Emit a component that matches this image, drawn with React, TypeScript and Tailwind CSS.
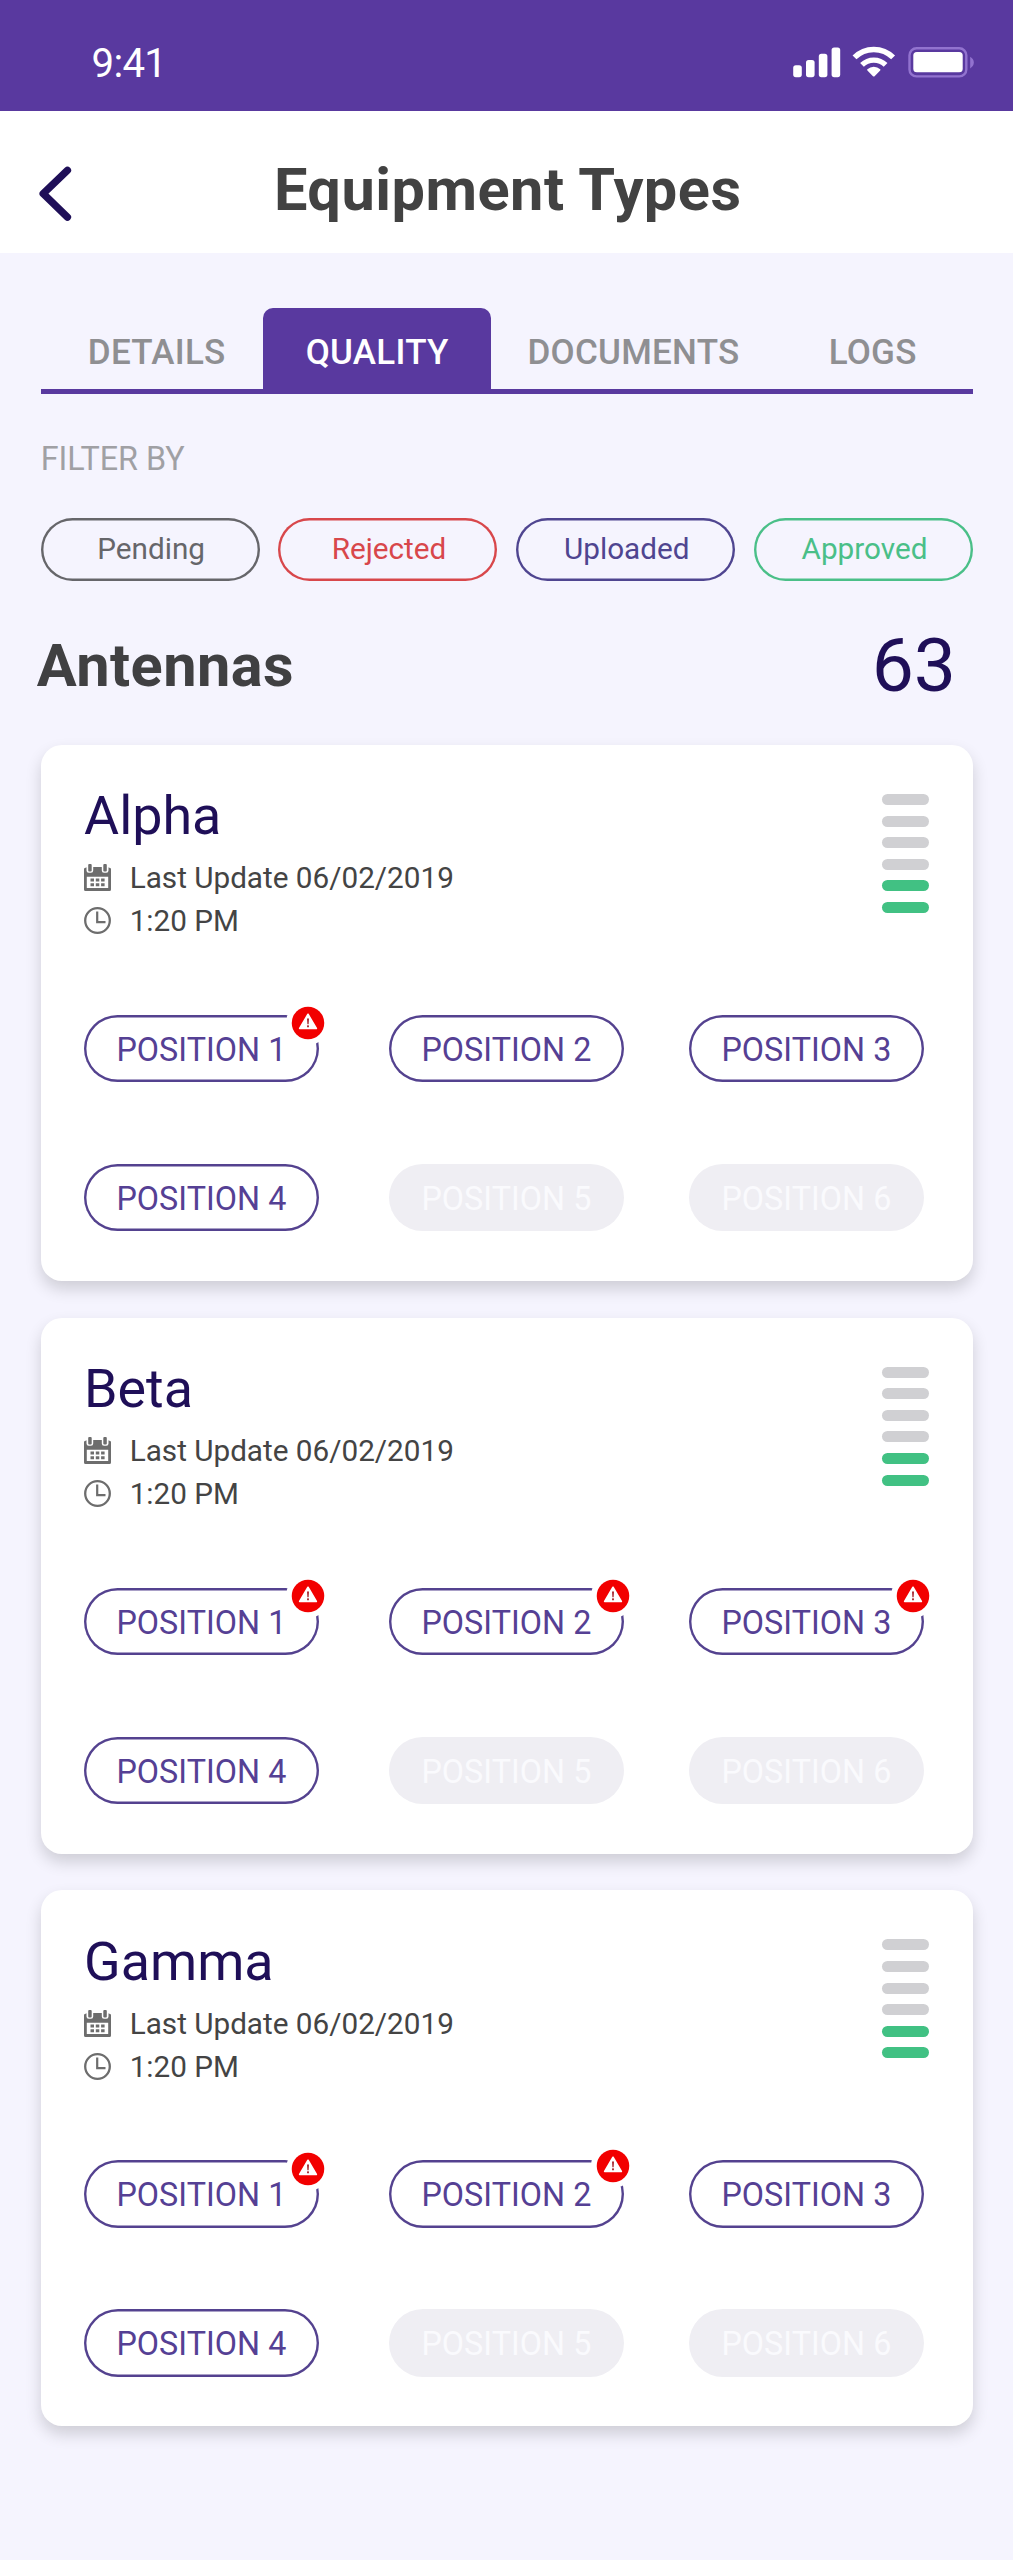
import React from "react";

type Position = { n: number; alert?: "normal" | "raised"; disabled?: boolean };
type Sector = { name: string; positions: Position[] };

const sectors: Sector[] = [
  {
    name: "Alpha",
    positions: [
      { n: 1, alert: "normal" }, { n: 2 }, { n: 3 },
      { n: 4 }, { n: 5, disabled: true }, { n: 6, disabled: true },
    ],
  },
  {
    name: "Beta",
    positions: [
      { n: 1, alert: "normal" }, { n: 2, alert: "normal" }, { n: 3, alert: "normal" },
      { n: 4 }, { n: 5, disabled: true }, { n: 6, disabled: true },
    ],
  },
  {
    name: "Gamma",
    positions: [
      { n: 1, alert: "normal" }, { n: 2, alert: "raised" }, { n: 3 },
      { n: 4 }, { n: 5, disabled: true }, { n: 6, disabled: true },
    ],
  },
];

const filters = [
  { label: "Pending", tone: "text-[#66666a] ring-[#66666a]" },
  { label: "Rejected", tone: "text-[#d8474b] ring-[#d8474b]" },
  { label: "Uploaded", tone: "text-[#4f4590] ring-[#4f4590]" },
  { label: "Approved", tone: "text-[#4abf88] ring-[#4abf88]" },
];

function StatusIcons() {
  return (
    <svg width="181" height="32" viewBox="0 0 181 32" fill="none" className="mt-[46px] shrink-0">
      <g fill="#fff">
        <rect x="0.2" y="19.3" width="8.6" height="11.9" rx="2.6" />
        <rect x="13" y="14" width="8.6" height="17.2" rx="2.6" />
        <rect x="25.8" y="7.8" width="8.6" height="23.4" rx="2.6" />
        <rect x="38.6" y="1.4" width="8.6" height="29.8" rx="2.6" />
        <path d="M74.4 23.2a9.4 9.4 0 0 1 12.8 0q.6.6 0 1.2l-5.6 5.8q-.8.8-1.6 0l-5.6-5.8q-.6-.6 0-1.2z" />
      </g>
      <path d="M61.5 11.4a27.25 27.25 0 0 1 38.6 0" stroke="#fff" strokeWidth="5.5" />
      <path d="M69 18.9a16.75 16.75 0 0 1 23.6 0" stroke="#fff" strokeWidth="5.3" />
      <rect x="116.5" y="2.3" width="56.8" height="28.1" rx="7" stroke="#9273cf" strokeWidth="2.4" />
      <rect x="120.3" y="6" width="49.4" height="20.3" rx="3.5" fill="#fff" />
      <path d="M177.2 10.8q3.6 2.2 3.6 5.8t-3.6 5.8z" fill="#9273cf" />
    </svg>
  );
}

function CalendarIcon() {
  return (
    <svg width="27" height="27" viewBox="0 0 27 27" className="shrink-0">
      <path
        fillRule="evenodd"
        d="M0 4.5L2.5 3.2V6.5A2.2 2.2 0 0 0 4.7 8.7H7A2.2 2.2 0 0 0 9.2 6.5V3H17.8V6.5A2.2 2.2 0 0 0 20 8.7H22.3A2.2 2.2 0 0 0 24.5 6.5V3.2L27 4.5V25.5Q27 27 25.5 27H1.5Q0 27 0 25.5zM2.8 12.7V24H24.2V12.7z"
        fill="#6d6d6d"
      />
      <rect x="4.2" y="0" width="3.5" height="7.4" rx="1" fill="#6d6d6d" />
      <rect x="19.3" y="0" width="3.5" height="7.4" rx="1" fill="#6d6d6d" />
      <path d="M6.5 14.5h3.5v3h-3.5zM11.8 14.5h3.5v3h-3.5zM17.1 14.5h3.5v3h-3.5zM6.5 19.3h3.5v3h-3.5zM11.8 19.3h3.5v3h-3.5zM17.1 19.3h3.5v3h-3.5z" fill="#6d6d6d" />
    </svg>
  );
}

function ClockIcon() {
  return (
    <svg width="27" height="27" viewBox="0 0 27 27" fill="none" stroke="#6d6d6d" className="shrink-0">
      <circle cx="13.5" cy="13.5" r="12.3" strokeWidth="2.3" />
      <path d="M13.2 4.5V15.2H21.5" strokeWidth="2.2" />
    </svg>
  );
}

function AlertBadge({ raised }: { raised: boolean }) {
  return (
    <span
      className={`absolute right-[-11px] flex size-[44px] items-center justify-center rounded-full bg-white ${
        raised ? "top-[-16.5px]" : "top-[-13.7px]"
      }`}
    >
      <svg width="34" height="34" viewBox="-0.75 -0.75 34 34" className="shrink-0">
        <circle cx="16.25" cy="16.25" r="16.25" fill="#f20000" />
        <path d="M16.25 7.5L24.6 21.7H7.9z" fill="#fff" stroke="#fff" strokeWidth="1.6" strokeLinejoin="round" />
        <path d="M15.25 11.8h2l-.4 5.6h-1.2z" fill="#a3202a" />
        <rect x="15.35" y="18.6" width="1.8" height="1.9" fill="#a3202a" />
      </svg>
    </span>
  );
}

function PositionPill({ n, alert, disabled }: Position) {
  return (
    <button
      className={`relative flex h-[67.5px] items-center rounded-full pt-[2.5px] pl-[32.3px] text-[32.3px] leading-[38px] tracking-[0.05px] whitespace-nowrap ${
        disabled ? "bg-[#efeef3] text-[#fafafd]" : "text-[#554094] ring-[2.4px] ring-[#54428f] ring-inset"
      }`}
    >
      {alert && <AlertBadge raised={alert === "raised"} />}
      <span className="relative">POSITION {n}</span>
    </button>
  );
}

function SectorCard({ name, positions }: Sector) {
  return (
    <section className="h-[536px] rounded-[21px] bg-white pt-[39.5px] pr-[44.3px] pl-[43.4px] shadow-[0_8px_16px_rgba(0,0,0,0.16)]">
      <div className="flex justify-between">
        <div>
          <h3 className="text-[53.8px] leading-[63px] text-[#1f0f58]">{name}</h3>
          <div className="mt-[13px] flex items-center gap-[18.6px] text-[29.7px] leading-[35px] text-[#444]">
            <CalendarIcon />
            <span>Last Update 06/02/2019</span>
          </div>
          <div className="mt-2 flex items-center gap-[18.6px] text-[29.7px] leading-[35px] text-[#444]">
            <ClockIcon />
            <span>1:20 PM</span>
          </div>
        </div>
        <div className="mt-[9.5px] flex flex-col gap-[10.6px]">
          {[0, 1, 2, 3, 4, 5].map((i) => (
            <div key={i} className={`h-[11px] w-[47px] rounded-full ${i < 4 ? "bg-[#d0d0d3]" : "bg-[#41c183]"}`} />
          ))}
        </div>
      </div>
      <div className="mt-[76.5px] grid grid-cols-[305px_300px_235px] gap-y-[81.3px]">
        {positions.map((p) => (
          <div key={p.n} className="grid grid-cols-[235px]">
            <PositionPill {...p} />
          </div>
        ))}
      </div>
    </section>
  );
}

export default function App() {
  return (
    <div className="min-h-[2560px] w-[1013px] overflow-hidden bg-[#f5f4fe] font-['Roboto',sans-serif]">
      <div className="flex h-[111px] justify-between bg-[#59399f] pr-[39.5px] pl-[91.5px]">
        <span className="mt-[40px] text-[40.2px] leading-[47px] tracking-[-0.7px] text-white">9:41</span>
        <StatusIcons />
      </div>

      <header className="relative h-[142.3px] bg-white pt-[43.8px] text-center">
        <button aria-label="Back" className="absolute top-[55px] left-[38px]">
          <svg width="34" height="56" viewBox="0 0 34 56" fill="none">
            <path d="M29.4 4.4L5.2 27.7L29.4 51.1" stroke="#1f0f58" strokeWidth="7.4" strokeLinecap="round" strokeLinejoin="round" />
          </svg>
        </button>
        <h1 className="pl-[2.5px] text-[59.5px] leading-[71px] font-bold tracking-[0.5px] text-[#424242]">Equipment Types</h1>
      </header>

      <main className="pr-[40px] pl-[40.7px]">
        <nav className="mt-[54.7px] grid h-[86.3px] grid-cols-[222px_228px_285.6px_1fr] border-b-5 border-[#59399f] text-center text-[35px] leading-[42px] font-medium tracking-[0.25px] text-[#8f8f92]">
          <a className="pt-[24.5px] pl-[10px]">DETAILS</a>
          <a className="rounded-t-[10px] bg-[#59399f] pt-[24.5px] pl-[1px] text-white">QUALITY</a>
          <a className="pt-[24.5px]">DOCUMENTS</a>
          <a className="pt-[24.5px] pr-[4px]">LOGS</a>
        </nav>

        <p className="mt-[45.7px] text-[32.3px] leading-[38px] text-[#a0a0a4]">FILTER BY</p>

        <div className="mt-[40.3px] grid grid-cols-4 gap-[18.8px]">
          {filters.map((f) => (
            <button key={f.label} className={`flex h-[62.7px] items-center justify-center rounded-full pb-[1px] pl-[2px] text-[29.7px] ring-[2.4px] ring-inset ${f.tone}`}>
              {f.label}
            </button>
          ))}
        </div>

        <div className="mt-[40px] flex h-[88px] justify-between pr-[17px]">
          <h2 className="mt-[10.7px] -ml-1 text-[59.5px] leading-[69px] font-bold tracking-[0.45px] text-[#404042]">Antennas</h2>
          <span className="text-[75px] leading-[88px] text-[#1f0f58]">63</span>
        </div>

        <div className="mt-[36px] flex flex-col gap-[36.75px]">
          {sectors.map((s) => (
            <SectorCard key={s.name} {...s} />
          ))}
        </div>
      </main>
    </div>
  );
}
